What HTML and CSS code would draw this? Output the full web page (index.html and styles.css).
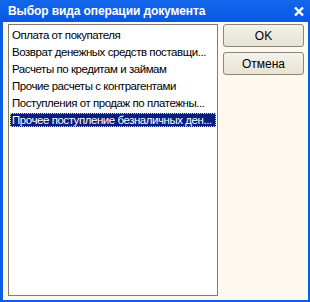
FILE: index.html
```html
<!DOCTYPE html>
<html lang="ru">
<head>
    <meta charset="UTF-8">
    <title>Выбор вида операции документа</title>
    <link rel="stylesheet" href="styles.css">
</head>
<body>
    <div class="dialog">
        <div class="title-bar">
            <span class="title">Выбор вида операции документа</span>
            <svg class="close" width="10" height="9" viewBox="0 0 10 9">
                <path d="M1 0.5 L9 8.5 M9 0.5 L1 8.5" stroke="#fff" stroke-width="2.4" fill="none"/>
            </svg>
        </div>
        <div class="dialog-body">
            <ul class="op-list">
                <li><span>Оплата от покупателя</span></li>
                <li><span>Возврат денежных средств поставщи...</span></li>
                <li><span>Расчеты по кредитам и займам</span></li>
                <li><span>Прочие расчеты с контрагентами</span></li>
                <li><span>Поступления от продаж по платежны...</span></li>
                <li class="selected"><span>Прочее поступление безналичных ден...</span></li>
            </ul>
            <div class="buttons">
                <button class="btn">OK</button>
                <button class="btn">Отмена</button>
            </div>
        </div>
    </div>
</body>
</html>
```

FILE: styles.css
```css
* {
    margin: 0;
    padding: 0;
    box-sizing: border-box;
}

body {
    width: 310px;
    height: 302px;
    font-family: "Liberation Sans", Arial, sans-serif;
    font-size: 11.5px;
    color: #000;
    background: #0a5ee8;
}

.dialog {
    display: flex;
    flex-direction: column;
    height: 302px;
}

.title-bar {
    height: 22px;
    display: flex;
    align-items: center;
    justify-content: space-between;
    padding: 0 6px 0 8px;
    background: linear-gradient(#1466ec, #0758e4);
    color: #fff;
}

.title {
    font-weight: bold;
    font-size: 12px;
    letter-spacing: -0.1px;
}

.close {
    display: block;
    margin-top: 1px;
}

.dialog-body {
    flex: 1;
    display: flex;
    gap: 5px;
    padding: 2px 4px 4px 5px;
    background: #fdf9ee;
    border-left: 3px solid #0a5ee8;
    border-right: 2px solid #0a5ee8;
    border-bottom: 2px solid #0a5ee8;
}

.op-list {
    list-style: none;
    width: 210px;
    height: 272px;
    background: #fff;
    border: 1px solid #7f7c72;
    padding: 1px 1px 0 1px;
}

.op-list li {
    height: 17px;
    display: flex;
    align-items: center;
}

.op-list li span {
    display: block;
    width: 100%;
    height: 14px;
    line-height: 14px;
    padding-left: 2px;
    white-space: nowrap;
    overflow: hidden;
    letter-spacing: -0.45px;
}

.op-list li.selected span {
    background: #0a1e82;
    color: #fff;
    outline: 1px dotted #d8d8a0;
    outline-offset: -1px;
}

.buttons {
    display: flex;
    flex-direction: column;
    gap: 5px;
    width: 81px;
}

.btn {
    height: 23px;
    font-family: "Liberation Sans", Arial, sans-serif;
    font-size: 12px;
    color: #000;
    background: linear-gradient(#f4f2ea, #e6e2d4);
    border: 1px solid #8a877a;
    border-radius: 3px;
}
```
